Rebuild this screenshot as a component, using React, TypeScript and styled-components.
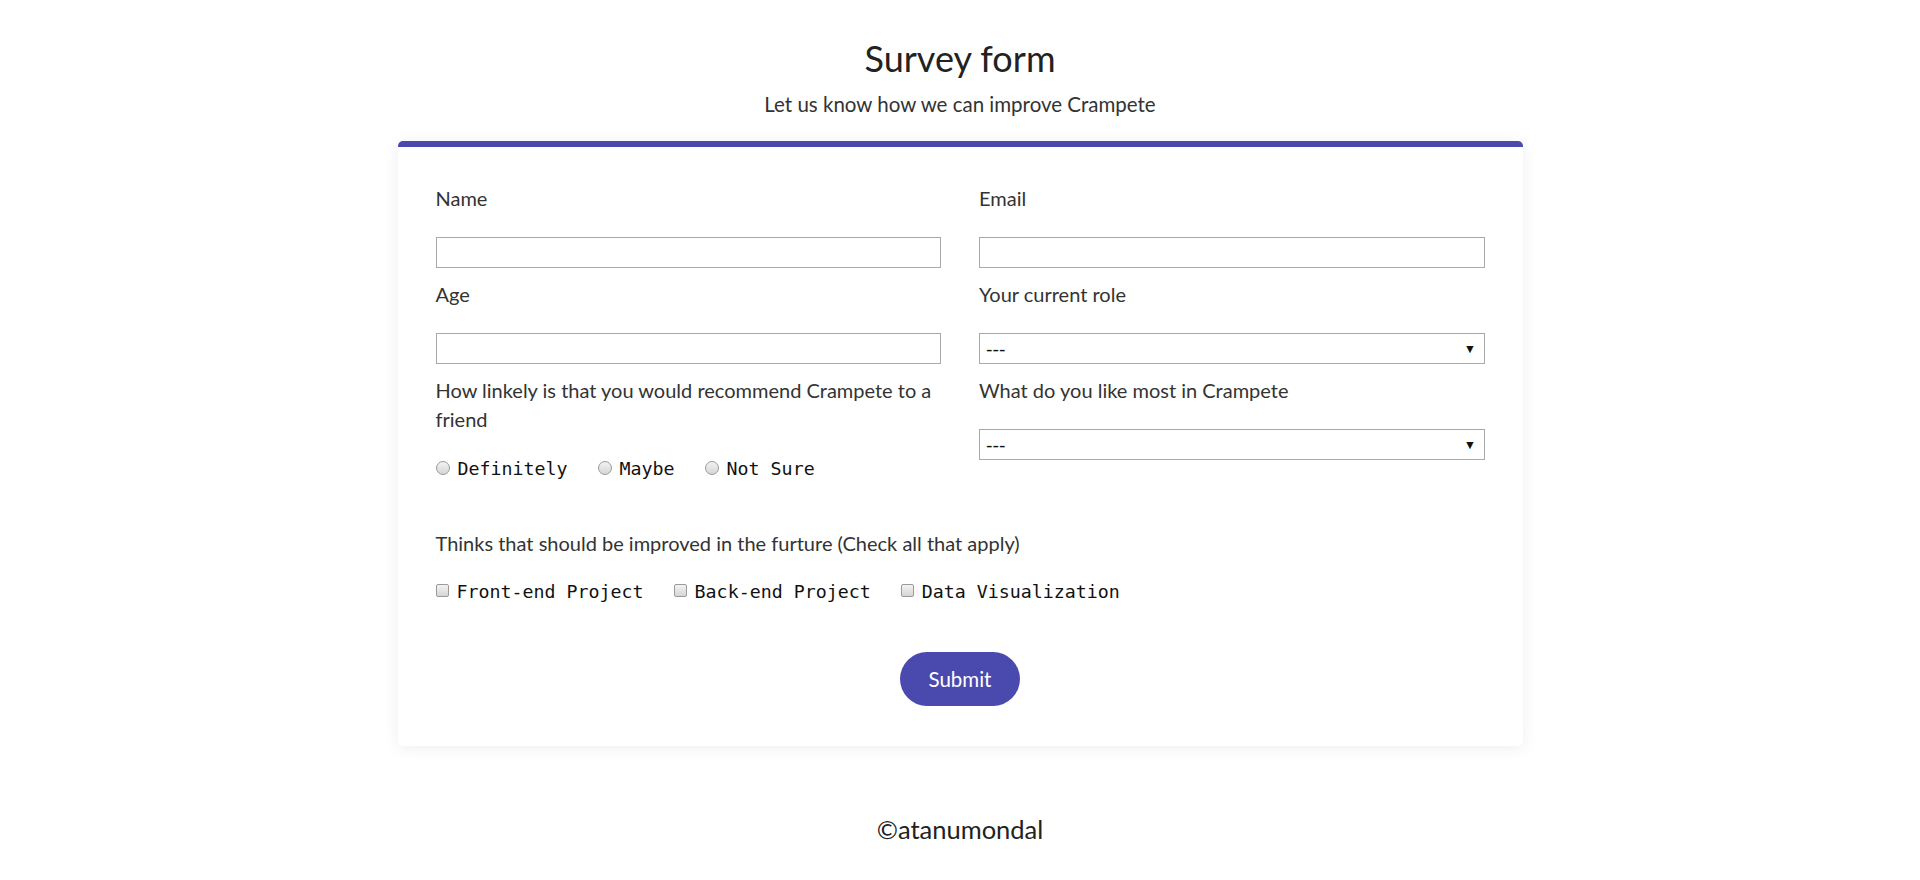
import React from 'react';
import styled, { createGlobalStyle } from 'styled-components';

const purple = '#4a4aae';

const GlobalStyle = createGlobalStyle`
  body {
    margin: 0;
    background: #fff;
    color: #2a2a2a;
    font-family: Lato, "Open Sans", sans-serif;
  }
`;

const Page = styled.div`
  padding-top: 39px;
  display: flex;
  flex-direction: column;
  align-items: center;
`;

const Title = styled.h1`
  margin: 0;
  font-size: 36px;
  font-weight: 400;
  line-height: 38px;
  color: #222;
`;

const Description = styled.p`
  margin: 12px 0 22px;
  font-size: 20.5px;
  line-height: 30px;
  color: #333;
`;

const Card = styled.form`
  box-sizing: border-box;
  width: 1125px;
  padding: 37px 38px 40px;
  border-top: 6px solid ${purple};
  border-radius: 5px;
  background: #fff;
  box-shadow: 0 2px 16px rgba(0, 0, 0, 0.07);
`;

const Columns = styled.div`
  display: grid;
  grid-template-columns: 1fr 1fr;
  column-gap: 38px;
  row-gap: 12px;
`;

const Field = styled.div`
  display: flex;
  flex-direction: column;
`;

const Label = styled.label<{ $space?: number }>`
  display: block;
  font-size: 20px;
  line-height: 29px;
  margin-bottom: ${(p) => p.$space ?? 24}px;
  color: #333;
`;

const TextInput = styled.input`
  box-sizing: border-box;
  width: 100%;
  height: 31px;
  margin: 0;
  padding: 0 6px;
  border: 1px solid #a9a9a9;
  border-radius: 0;
  font-size: 15px;
  outline: none;
`;

const SelectWrap = styled.div`
  position: relative;
  height: 31px;
`;

const Select = styled.select`
  box-sizing: border-box;
  width: 100%;
  height: 31px;
  margin: 0;
  padding: 0 24px 0 6px;
  border: 1px solid #a9a9a9;
  border-radius: 0;
  background: #fff;
  appearance: none;
  font-family: "DejaVu Sans", sans-serif;
  font-size: 18px;
  color: #111;
`;

const Arrow = styled.span`
  position: absolute;
  right: 11px;
  top: 50%;
  transform: translateY(-50%);
  font-family: "DejaVu Sans", sans-serif;
  font-size: 9.5px;
  line-height: 1;
  color: #111;
  pointer-events: none;
`;

const Choices = styled.div`
  display: flex;
  align-items: center;
  gap: 30px;
  height: 29px;
`;

const Choice = styled.label`
  display: flex;
  align-items: center;
  gap: 8px;
  font-family: "DejaVu Sans Mono", "Liberation Mono", monospace;
  font-size: 18.3px;
  color: #111;
`;

const Box = styled.input<{ $round?: boolean }>`
  appearance: none;
  box-sizing: border-box;
  width: ${(p) => (p.$round ? 14 : 13)}px;
  height: ${(p) => (p.$round ? 14 : 13)}px;
  margin: 0 0 2px;
  border: 1px solid #9a9a9a;
  border-radius: ${(p) => (p.$round ? '50%' : '2px')};
  background: linear-gradient(#f2f2f2, #d6d6d6);
  flex: none;
`;

const Section = styled.div`
  margin-top: 46px;
`;

const Actions = styled.div`
  display: flex;
  justify-content: center;
  margin-top: 46px;
`;

const SubmitButton = styled.button`
  height: 54px;
  padding: 0 29px;
  border: none;
  border-radius: 27px;
  background: ${purple};
  color: #fff;
  font-family: Lato, "Open Sans", sans-serif;
  font-size: 20.5px;
  cursor: pointer;
`;

const Footer = styled.footer`
  margin: 65px 0 0;
  font-size: 25.5px;
  line-height: 36px;
  color: #222;
`;

const SelectField: React.FC<{ id: string; label: string }> = ({ id, label }) => (
  <Field>
    <Label htmlFor={id}>{label}</Label>
    <SelectWrap>
      <Select id={id} defaultValue="">
        <option value="">---</option>
      </Select>
      <Arrow>▼</Arrow>
    </SelectWrap>
  </Field>
);

const App: React.FC = () => {
  const ratings = ['Definitely', 'Maybe', 'Not Sure'];
  const improvements = ['Front-end Project', 'Back-end Project', 'Data Visualization'];

  return (
    <>
      <GlobalStyle />
      <Page>
        <Title>Survey form</Title>
        <Description>Let us know how we can improve Crampete</Description>

        <Card onSubmit={(e) => e.preventDefault()}>
          <Columns>
            <Field>
              <Label htmlFor="name">Name</Label>
              <TextInput id="name" type="text" />
            </Field>
            <Field>
              <Label htmlFor="email">Email</Label>
              <TextInput id="email" type="email" />
            </Field>
            <Field>
              <Label htmlFor="age">Age</Label>
              <TextInput id="age" type="number" />
            </Field>
            <SelectField id="role" label="Your current role" />
            <Field>
              <Label $space={20}>How linkely is that you would recommend Crampete to a friend</Label>
              <Choices>
                {ratings.map((r) => (
                  <Choice key={r}>
                    <Box $round type="radio" name="recommend" value={r} />
                    {r}
                  </Choice>
                ))}
              </Choices>
            </Field>
            <SelectField id="like" label="What do you like most in Crampete" />
          </Columns>

          {/* checkbox group spans both columns */}
          <Section>
            <Label $space={19}>Thinks that should be improved in the furture (Check all that apply)</Label>
            <Choices>
              {improvements.map((i) => (
                <Choice key={i}>
                  <Box type="checkbox" value={i} />
                  {i}
                </Choice>
              ))}
            </Choices>
          </Section>

          <Actions>
            <SubmitButton type="submit">Submit</SubmitButton>
          </Actions>
        </Card>

        <Footer>©atanumondal</Footer>
      </Page>
    </>
  );
};

export default App;
